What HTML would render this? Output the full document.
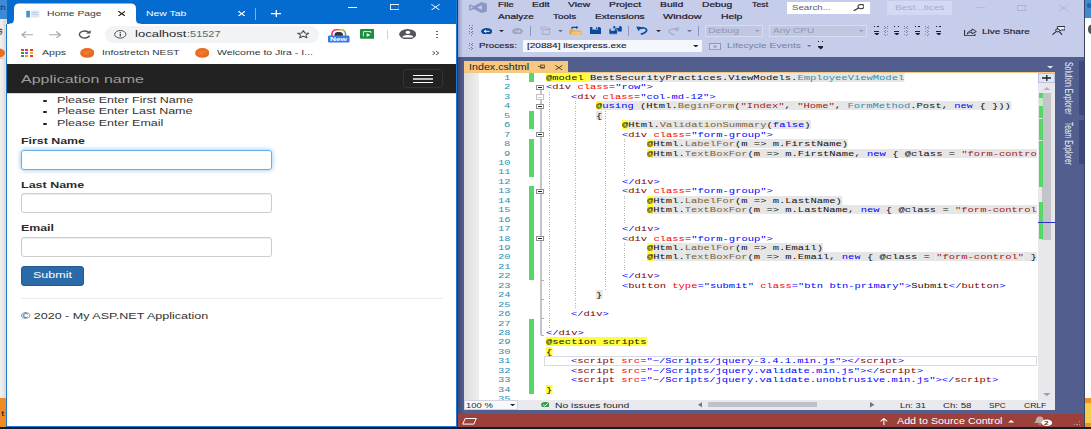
<!DOCTYPE html>
<html><head><meta charset="utf-8"><title>Home Page</title>
<style>
html,body{margin:0;padding:0}
body{width:1091px;height:429px;overflow:hidden;background:#fff;position:relative;font-family:"Liberation Sans", sans-serif}
#r{position:absolute;left:0;top:0;width:1091px;height:429px;overflow:hidden}
#r div,#r svg,#r span.t{position:absolute;display:block}
#r span.t{white-space:pre;transform-origin:0 0;font-family:"Liberation Sans", sans-serif}
#r span.m{font-family:"Liberation Mono", monospace}
#r .cl{position:absolute;white-space:pre;transform-origin:0 0;font-family:"Liberation Mono", monospace}
#r .cl span{position:static;display:inline}
</style></head>
<body><div id="r">
<div style="left:0px;top:0px;width:7px;height:18.5px;background:#3d8bd4;"></div>
<div style="left:0px;top:18.5px;width:7px;height:379px;background:linear-gradient(90deg,#f0f0f0 0%,#e9e9e9 45%,#d9d9d9 68%,#eadcd5 76%,#eadcd5 100%);"></div>
<div style="left:0px;top:58px;width:5px;height:1px;background:#cfd2d6;"></div>
<div style="left:0px;top:397.5px;width:7px;height:29.5px;background:#f08a24;"></div>
<span class="t" style="left:1px;top:410.00px;font-size:7.99px;line-height:7.99px;color:#222;transform:scaleX(1.5775);">t</span>
<span class="t" style="left:-3.5px;top:3.52px;font-size:7.56px;line-height:7.56px;color:#15304d;transform:scaleX(1.0896);">ch</span>
<svg style="left:0px;top:47.6px;" width="6" height="10" viewBox="0 0 6 10" preserveAspectRatio="none"><ellipse cx="-2.4" cy="5" rx="7.4" ry="4.8" fill="#ea6a1f"/></svg>
<svg style="left:0px;top:28px;" width="3" height="8" viewBox="0 0 3 8" preserveAspectRatio="none"><path d="M0 1 L2.4 2 M0 3.4 L2.4 4.4 M0 6 L2 6" stroke="#444" stroke-width="1.2" fill="none"/></svg>
<div style="left:1084px;top:0px;width:7px;height:17.6px;background:#3d8bd4;"></div>
<div style="left:1086.5px;top:3.2px;width:4.5px;height:4.6px;background:#2e5f96;border-radius:2px"></div>
<div style="left:1084px;top:17.6px;width:7px;height:380.2px;background:#ffffff;"></div>
<div style="left:1084px;top:397.8px;width:7px;height:29px;background:#f4901f;"></div>
<div style="left:1085.4px;top:402.5px;width:5.6px;height:20px;background:#f4cf4e;"></div>
<svg style="left:1087px;top:24px;" width="4" height="11" viewBox="0 0 4 11" preserveAspectRatio="none"><ellipse cx="4.4" cy="5.3" rx="3.4" ry="4.6" fill="#53565a"/></svg>
<div style="left:6.5px;top:0px;width:450px;height:426.8px;background:#ffffff;"></div>
<div style="left:6.5px;top:0px;width:450px;height:23.7px;background:#046bd1;"></div>
<svg style="left:9px;top:3px" width="132" height="23" viewBox="0 0 132 23" preserveAspectRatio="none"><path d="M0 20.7 C4 20.7 5 19 5 15.5 L5 5.4 C5 2 7 0.45 10 0.45 L122 0.45 C125 0.45 127 2 127 5.4 L127 15.5 C127 19 128 20.7 132 20.7 L132 23 L0 23 Z" fill="#fff"/></svg>
<svg style="left:25.5px;top:9.5px;" width="14" height="8" viewBox="0 0 14 8" preserveAspectRatio="none"><rect x="0.3" y="0.8" width="3.6" height="6.6" fill="#3b93d6"/><rect x="5" y="0.6" width="8.4" height="7" fill="#dfe6f3"/><rect x="6.2" y="2.2" width="5" height="0.9" fill="#b9c4dd"/><rect x="6.2" y="4.2" width="6" height="0.9" fill="#c5cfe4"/></svg>
<span class="t" style="left:47.3px;top:9.61px;font-size:7.99px;line-height:7.99px;color:#3c3c3c;transform:scaleX(1.2923);">Home Page</span>
<svg style="left:117.5px;top:10.8px;" width="7.6" height="5.4" viewBox="0 0 7.6 5.4" preserveAspectRatio="none"><path d="M0.3 0.2 L7.3 5.2 M7.3 0.2 L0.3 5.2" stroke="#222" stroke-width="1.15" fill="none"/></svg>
<span class="t" style="left:145.7px;top:9.61px;font-size:7.99px;line-height:7.99px;color:#ffffff;transform:scaleX(1.3033);">New Tab</span>
<svg style="left:238px;top:10.8px;" width="7.4" height="5.4" viewBox="0 0 7.4 5.4" preserveAspectRatio="none"><path d="M0.3 0.2 L7.1 5.2 M7.1 0.2 L0.3 5.2" stroke="#fff" stroke-width="1.15" fill="none"/></svg>
<div style="left:255.2px;top:8px;width:0.9px;height:11.5px;background:#7fb0e6;"></div>
<svg style="left:270.5px;top:10px;" width="10.6" height="7.2" viewBox="0 0 10.6 7.2" preserveAspectRatio="none"><path d="M5.3 0 V7.2 M0 3.6 H10.6" stroke="#fff" stroke-width="1.3" fill="none"/></svg>
<div style="left:348px;top:6.9px;width:9.2px;height:0.9px;background:#ffffff;"></div>
<svg style="left:389.6px;top:4.2px;" width="9.8" height="6.2" viewBox="0 0 9.8 6.2" preserveAspectRatio="none"><rect x="0.5" y="0.5" width="8.8" height="5.2" stroke="#fff" stroke-width="0.9" fill="none"/></svg>
<svg style="left:431px;top:3.9px;" width="9" height="6.4" viewBox="0 0 9 6.4" preserveAspectRatio="none"><path d="M0.2 0.2 L8.8 6.2 M8.8 0.2 L0.2 6.2" stroke="#fff" stroke-width="0.95" fill="none"/></svg>
<svg style="left:20.8px;top:30.6px;" width="12.4" height="7.6" viewBox="0 0 12.4 7.6" preserveAspectRatio="none"><path d="M12.2 3.8 H1 M5.2 0.5 L0.9 3.8 L5.2 7.1" stroke="#a4a8ad" stroke-width="1.15" fill="none"/></svg>
<svg style="left:49.4px;top:30.6px;" width="12.4" height="7.6" viewBox="0 0 12.4 7.6" preserveAspectRatio="none"><path d="M0.2 3.8 H11.4 M7.2 0.5 L11.5 3.8 L7.2 7.1" stroke="#a4a8ad" stroke-width="1.15" fill="none"/></svg>
<svg style="left:78.3px;top:30px;" width="13" height="8.6" viewBox="0 0 13 8.6" preserveAspectRatio="none"><path d="M10.6 2.2 A5.2 3.5 0 1 0 11.6 5.6" stroke="#4b4e52" stroke-width="1.4" fill="none"/><path d="M12.6 0.2 V3.6 H7.8 Z" fill="#4b4e52"/></svg>
<div style="left:104.5px;top:25.8px;width:214.5px;height:16.8px;background:#f1f3f4;border-radius:8.4px"></div>
<svg style="left:114px;top:30px;" width="12.6" height="8.6" viewBox="0 0 12.6 8.6" preserveAspectRatio="none"><ellipse cx="6.3" cy="4.3" rx="5.6" ry="3.8" stroke="#4b4e52" stroke-width="1" fill="none"/><rect x="5.6" y="3.7" width="1.4" height="2.7" fill="#4b4e52"/><rect x="5.6" y="1.9" width="1.4" height="1" fill="#4b4e52"/></svg>
<span class="t" style="left:135px;top:29.72px;font-size:9.16px;line-height:9.16px;color:#26282b;transform:scaleX(1.4222);">localhost</span>
<span class="t" style="left:186.9px;top:29.72px;font-size:9.16px;line-height:9.16px;color:#63666a;transform:scaleX(1.1993);">:51527</span>
<svg style="left:296.5px;top:30.2px;" width="12.6" height="8.4" viewBox="0 0 12.6 8.4" preserveAspectRatio="none"><path d="M6.3 0.6 L8 3.1 L11.9 3.3 L8.9 5.1 L10 7.8 L6.3 6.2 L2.6 7.8 L3.7 5.1 L0.7 3.3 L4.6 3.1 Z" stroke="#4b4e52" stroke-width="1.05" fill="none" stroke-linejoin="round"/></svg>
<svg style="left:328px;top:29px;" width="21.5" height="13.5" viewBox="0 0 21.5 13.5" preserveAspectRatio="none"><defs><linearGradient id="rb" x1="0" x2="1" y1="0" y2="0"><stop offset="0" stop-color="#ec1c8c"/><stop offset="0.4" stop-color="#f4503a"/><stop offset="0.7" stop-color="#f8a61f"/><stop offset="1" stop-color="#3fb868"/></linearGradient></defs><path d="M4 8 V5 A4.2 4.2 0 0 1 8.2 0.8 H13.3 A4.2 4.2 0 0 1 17.5 5 V8" stroke="url(#rb)" stroke-width="1.5" fill="#fff"/><path d="M6.6 8 V5.6 A3 2.6 0 0 1 9.6 3 H11.9 A3 2.6 0 0 1 14.9 5.6 V8 Z" fill="#2f3640"/><rect x="0" y="6.6" width="21.5" height="6.9" rx="1.3" fill="#3c78e6"/></svg>
<span class="t" style="left:330.2px;top:35.75px;font-size:6.1px;line-height:6.1px;font-weight:700;color:#ffffff;transform:scaleX(1.3566);">New</span>
<svg style="left:360px;top:29.4px;" width="14.4" height="9.8" viewBox="0 0 14.4 9.8" preserveAspectRatio="none"><rect x="0" y="0" width="14.4" height="9.8" rx="1.2" fill="#1e8e3e"/><path d="M3.4 7.4 V2.6 H11 V4" stroke="#d7f0dc" stroke-width="1" fill="none"/><path d="M6.6 4.2 L10.6 6 L6.6 7.8 Z" fill="#fff"/></svg>
<div style="left:387.2px;top:29.6px;width:0.9px;height:9.6px;background:#cfd2d6;"></div>
<svg style="left:399px;top:28.9px;" width="17.4" height="10.6" viewBox="0 0 17.4 10.6" preserveAspectRatio="none"><ellipse cx="8.7" cy="5.3" rx="8.5" ry="5.2" fill="#53565a"/><ellipse cx="8.9" cy="3.3" rx="2.4" ry="1.65" fill="#fff"/><path d="M3.4 8.2 C3.4 5.2 14.4 5.2 14.4 8.2 C11.4 8.5 6.4 8.5 3.4 8.2 Z" fill="#fff"/></svg>
<div style="left:436px;top:31px;width:2px;height:1.4px;background:#4b4e52;border-radius:1px"></div>
<div style="left:436px;top:33.9px;width:2px;height:1.4px;background:#4b4e52;border-radius:1px"></div>
<div style="left:436px;top:36.8px;width:2px;height:1.4px;background:#4b4e52;border-radius:1px"></div>
<div style="left:20.6px;top:49.1px;width:3px;height:1.8px;background:#e53935;"></div>
<div style="left:25.1px;top:49.1px;width:3px;height:1.8px;background:#e53935;"></div>
<div style="left:29.6px;top:49.1px;width:3px;height:1.8px;background:#e53935;"></div>
<div style="left:20.6px;top:52.1px;width:3px;height:1.8px;background:#2e9b4e;"></div>
<div style="left:25.1px;top:52.1px;width:3px;height:1.8px;background:#3b7ded;"></div>
<div style="left:29.6px;top:52.1px;width:3px;height:1.8px;background:#f4b400;"></div>
<div style="left:20.6px;top:55.1px;width:3px;height:1.8px;background:#2e9b4e;"></div>
<div style="left:25.1px;top:55.1px;width:3px;height:1.8px;background:#f4a000;"></div>
<div style="left:29.6px;top:55.1px;width:3px;height:1.8px;background:#e53935;"></div>
<span class="t" style="left:41.5px;top:49.08px;font-size:7.85px;line-height:7.85px;color:#33363a;transform:scaleX(1.3471);">Apps</span>
<svg style="left:79.7px;top:47.8px;" width="14.6" height="9.9" viewBox="0 0 14.6 9.9" preserveAspectRatio="none"><ellipse cx="7.3" cy="4.95" rx="7.2" ry="4.9" fill="#ea6a1f"/><path d="M3.4 4.3 C5 3.2 6.4 5 8 4 S10.4 3.6 11.4 4.2 M3.8 6 C5.4 5.2 7 6.6 8.8 5.8" stroke="#f29a5d" stroke-width="0.7" fill="none"/></svg>
<svg style="left:194.7px;top:47.8px;" width="14.6" height="9.9" viewBox="0 0 14.6 9.9" preserveAspectRatio="none"><ellipse cx="7.3" cy="4.95" rx="7.2" ry="4.9" fill="#ea6a1f"/><path d="M3.4 4.3 C5 3.2 6.4 5 8 4 S10.4 3.6 11.4 4.2 M3.8 6 C5.4 5.2 7 6.6 8.8 5.8" stroke="#f29a5d" stroke-width="0.7" fill="none"/></svg>
<span class="t" style="left:102px;top:49.08px;font-size:7.85px;line-height:7.85px;color:#33363a;transform:scaleX(1.2957);">Infostretch NEST</span>
<span class="t" style="left:217px;top:49.08px;font-size:7.85px;line-height:7.85px;color:#33363a;transform:scaleX(1.3360);">Welcome to Jira - I...</span>
<svg style="left:432px;top:51px;" width="7.4" height="4.2" viewBox="0 0 7.4 4.2" preserveAspectRatio="none"><path d="M0.4 0.2 L3 2.1 L0.4 4 M4 0.2 L6.8 2.1 L4 4" stroke="#4b4e52" stroke-width="0.95" fill="none"/></svg>
<div style="left:7.1px;top:63.7px;width:448.7px;height:29.6px;background:#222222;"></div>
<div style="left:7.1px;top:93px;width:448.7px;height:1px;background:#d6d6d6;"></div>
<span class="t" style="left:21px;top:73.90px;font-size:10.61px;line-height:10.61px;color:#9d9d9d;transform:scaleX(1.5112);">Application name</span>
<div style="left:403px;top:69.3px;width:40px;height:19.2px;background:transparent;border:1px solid #333;border-radius:3px;box-sizing:border-box"></div>
<div style="left:413px;top:74.7px;width:20px;height:1.4px;background:#ffffff;"></div>
<div style="left:413px;top:78.3px;width:20px;height:1.5px;background:#bdbdbd;"></div>
<div style="left:413px;top:81.7px;width:20px;height:1.4px;background:#ffffff;"></div>
<div style="left:7.1px;top:93.3px;width:440px;height:40px;overflow:hidden;background:none" id="vs">
<div style="left:-7.1px;top:-93.3px;width:0;height:0">
<div style="left:43.2px;top:99.5px;width:4px;height:2.2px;background:#222;border-radius:1.1px"></div>
<span class="t" style="left:57px;top:95.54px;font-size:8.72px;line-height:8.72px;color:#333;transform:scaleX(1.4339);">Please Enter First Name</span>
<div style="left:43.2px;top:111px;width:4px;height:2.2px;background:#222;border-radius:1.1px"></div>
<span class="t" style="left:57px;top:107.04px;font-size:8.72px;line-height:8.72px;color:#333;transform:scaleX(1.4336);">Please Enter Last Name</span>
<div style="left:43.2px;top:122.5px;width:4px;height:2.2px;background:#222;border-radius:1.1px"></div>
<span class="t" style="left:57px;top:118.54px;font-size:8.72px;line-height:8.72px;color:#333;transform:scaleX(1.4348);">Please Enter Email</span>
</div>
</div>
<span class="t" style="left:21px;top:136.59px;font-size:8.43px;line-height:8.43px;font-weight:700;color:#2b2b2b;transform:scaleX(1.4702);">First Name</span>
<div style="left:21px;top:150.3px;width:251px;height:19.6px;background:#fff;border:1px solid #66afe9;border-radius:3px;box-sizing:border-box;box-shadow:0 0 5px rgba(102,175,233,.75)"></div>
<span class="t" style="left:21px;top:180.69px;font-size:8.43px;line-height:8.43px;font-weight:700;color:#2b2b2b;transform:scaleX(1.4832);">Last Name</span>
<div style="left:21px;top:193.4px;width:251px;height:19.8px;background:#fff;border:1px solid #cccccc;border-radius:3px;box-sizing:border-box;box-shadow:inset 0 1px 1px rgba(0,0,0,.07)"></div>
<span class="t" style="left:21px;top:223.88px;font-size:8.43px;line-height:8.43px;font-weight:700;color:#2b2b2b;transform:scaleX(1.4677);">Email</span>
<div style="left:21px;top:237.3px;width:251px;height:19.4px;background:#fff;border:1px solid #cccccc;border-radius:3px;box-sizing:border-box;box-shadow:inset 0 1px 1px rgba(0,0,0,.07)"></div>
<div style="left:21px;top:266.2px;width:62.6px;height:19.4px;background:#2a6aa9;border:1px solid #245a90;border-radius:3px;box-sizing:border-box"></div>
<span class="t" style="left:32.6px;top:271.46px;font-size:8.87px;line-height:8.87px;color:#ffffff;transform:scaleX(1.4105);">Submit</span>
<div style="left:21px;top:298.2px;width:422px;height:0.8px;background:#ececec;"></div>
<span class="t" style="left:21px;top:311.79px;font-size:8.43px;line-height:8.43px;color:#333;transform:scaleX(1.4895);">© 2020 - My ASP.NET Application</span>
<div style="left:5.8px;top:23.7px;width:1.3px;height:403.3px;background:#1f78cf;"></div>
<div style="left:455.8px;top:0px;width:1.4px;height:427px;background:#1f78cf;"></div>
<div style="left:6.5px;top:426px;width:450px;height:1px;background:#1b76d6;"></div>
<div style="left:0px;top:427px;width:1091px;height:2px;background:#141a26;"></div>
<div style="left:458px;top:0px;width:626px;height:427px;background:#c6cdea;"></div>
<div style="left:457.2px;top:0px;width:1.2px;height:427px;background:#2c3560;"></div>
<div style="left:458.3px;top:0px;width:5px;height:57px;background:linear-gradient(90deg,#939dca,#c6cdea);"></div>
<div style="left:1083.6px;top:0px;width:1.2px;height:427px;background:#3b4466;"></div>
<svg style="left:468.9px;top:2px;" width="17.8" height="11" viewBox="0 0 17.8 11" preserveAspectRatio="none"><path d="M12.6 0 L17.8 1.4 V9.6 L12.6 11 L4.6 6.9 L1.6 8.6 L0 8 V3 L1.6 2.4 L4.6 4.1 Z M12.8 3.2 L8.2 5.5 L12.8 7.8 Z M1.5 3.7 V7.3 L4 5.5 Z" fill="#8b97c5" fill-rule="evenodd"/></svg>
<span class="t" style="left:498px;top:0.72px;font-size:7.56px;line-height:7.56px;color:#1f1a2e;transform:scaleX(1.2981);-webkit-text-stroke:0.22px #1f1a2e;">File</span>
<span class="t" style="left:531.8px;top:0.72px;font-size:7.56px;line-height:7.56px;color:#1f1a2e;transform:scaleX(1.3522);-webkit-text-stroke:0.22px #1f1a2e;">Edit</span>
<span class="t" style="left:567.7px;top:0.72px;font-size:7.56px;line-height:7.56px;color:#1f1a2e;transform:scaleX(1.3613);-webkit-text-stroke:0.22px #1f1a2e;">View</span>
<span class="t" style="left:608.7px;top:0.72px;font-size:7.56px;line-height:7.56px;color:#1f1a2e;transform:scaleX(1.3660);-webkit-text-stroke:0.22px #1f1a2e;">Project</span>
<span class="t" style="left:659.8px;top:0.72px;font-size:7.56px;line-height:7.56px;color:#1f1a2e;transform:scaleX(1.3812);-webkit-text-stroke:0.22px #1f1a2e;">Build</span>
<span class="t" style="left:701.8px;top:0.72px;font-size:7.56px;line-height:7.56px;color:#1f1a2e;transform:scaleX(1.3573);-webkit-text-stroke:0.22px #1f1a2e;">Debug</span>
<span class="t" style="left:752.2px;top:0.72px;font-size:7.56px;line-height:7.56px;color:#1f1a2e;transform:scaleX(1.1630);-webkit-text-stroke:0.22px #1f1a2e;">Test</span>
<span class="t" style="left:498px;top:12.68px;font-size:7.85px;line-height:7.85px;color:#1f1a2e;transform:scaleX(1.2900);-webkit-text-stroke:0.22px #1f1a2e;">Analyze</span>
<span class="t" style="left:553.2px;top:12.68px;font-size:7.85px;line-height:7.85px;color:#1f1a2e;transform:scaleX(1.2614);-webkit-text-stroke:0.22px #1f1a2e;">Tools</span>
<span class="t" style="left:595px;top:12.68px;font-size:7.85px;line-height:7.85px;color:#1f1a2e;transform:scaleX(1.2951);-webkit-text-stroke:0.22px #1f1a2e;">Extensions</span>
<span class="t" style="left:663.3px;top:12.68px;font-size:7.85px;line-height:7.85px;color:#1f1a2e;transform:scaleX(1.3796);-webkit-text-stroke:0.22px #1f1a2e;">Window</span>
<span class="t" style="left:720.8px;top:12.68px;font-size:7.85px;line-height:7.85px;color:#1f1a2e;transform:scaleX(1.3258);-webkit-text-stroke:0.22px #1f1a2e;">Help</span>
<div style="left:787.3px;top:1.5px;width:83.2px;height:12.1px;background:#ffffff;"></div>
<span class="t" style="left:792.4px;top:3.82px;font-size:7.56px;line-height:7.56px;color:#5b5b66;transform:scaleX(1.2846);">Search...</span>
<svg style="left:852.5px;top:3.8px;" width="11.8" height="7.2" viewBox="0 0 11.8 7.2" preserveAspectRatio="none"><ellipse cx="8" cy="2.6" rx="3.1" ry="2.1" stroke="#3a3a44" stroke-width="1.1" fill="none"/><path d="M5.6 4 L0.6 6.8" stroke="#3a3a44" stroke-width="1.3"/></svg>
<div style="left:887.1px;top:1px;width:65.1px;height:13.8px;background:#d3d9f3;"></div>
<span class="t" style="left:894.8px;top:3.82px;font-size:7.56px;line-height:7.56px;color:#a3add6;transform:scaleX(1.3461);">Best...tices</span>
<div style="left:976px;top:7.2px;width:9px;height:0.8px;background:#b2bbdf;"></div>
<div style="left:1017px;top:5.1px;width:9.4px;height:5.8px;background:transparent;border:1px solid #aab3d8;box-sizing:border-box"></div>
<svg style="left:1058.8px;top:5px;" width="8.8" height="6" viewBox="0 0 8.8 6" preserveAspectRatio="none"><path d="M0.2 0.2 L8.6 5.8 M8.6 0.2 L0.2 5.8" stroke="#aab3d8" stroke-width="0.9" fill="none"/></svg>
<div style="left:469px;top:25.2px;width:1.3px;height:0.85px;background:#6d789f;"></div>
<div style="left:472px;top:25.2px;width:1.3px;height:0.85px;background:#6d789f;"></div>
<div style="left:470.5px;top:26.55px;width:1.3px;height:0.85px;background:#6d789f;"></div>
<div style="left:469px;top:27.9px;width:1.3px;height:0.85px;background:#6d789f;"></div>
<div style="left:472px;top:27.9px;width:1.3px;height:0.85px;background:#6d789f;"></div>
<div style="left:470.5px;top:29.25px;width:1.3px;height:0.85px;background:#6d789f;"></div>
<div style="left:469px;top:30.6px;width:1.3px;height:0.85px;background:#6d789f;"></div>
<div style="left:472px;top:30.6px;width:1.3px;height:0.85px;background:#6d789f;"></div>
<div style="left:470.5px;top:31.95px;width:1.3px;height:0.85px;background:#6d789f;"></div>
<div style="left:469px;top:33.3px;width:1.3px;height:0.85px;background:#6d789f;"></div>
<div style="left:472px;top:33.3px;width:1.3px;height:0.85px;background:#6d789f;"></div>
<div style="left:470.5px;top:34.65px;width:1.3px;height:0.85px;background:#6d789f;"></div>
<div style="left:469px;top:42.5px;width:1.3px;height:0.85px;background:#6d789f;"></div>
<div style="left:472px;top:42.5px;width:1.3px;height:0.85px;background:#6d789f;"></div>
<div style="left:470.5px;top:43.85px;width:1.3px;height:0.85px;background:#6d789f;"></div>
<div style="left:469px;top:45.2px;width:1.3px;height:0.85px;background:#6d789f;"></div>
<div style="left:472px;top:45.2px;width:1.3px;height:0.85px;background:#6d789f;"></div>
<div style="left:470.5px;top:46.55px;width:1.3px;height:0.85px;background:#6d789f;"></div>
<div style="left:469px;top:47.9px;width:1.3px;height:0.85px;background:#6d789f;"></div>
<div style="left:472px;top:47.9px;width:1.3px;height:0.85px;background:#6d789f;"></div>
<div style="left:470.5px;top:49.25px;width:1.3px;height:0.85px;background:#6d789f;"></div>
<svg style="left:481px;top:27.5px;" width="11.4" height="6.6" viewBox="0 0 11.4 6.6" preserveAspectRatio="none"><ellipse cx="5.7" cy="3.3" rx="5.6" ry="3.3" fill="#0c4a97"/><path d="M8.6 3.3 H3.6 M5.2 2 L3.2 3.3 L5.2 4.6" stroke="#fff" stroke-width="0.95" fill="none"/></svg>
<svg style="left:499.3px;top:29.8px;" width="5" height="2.2" viewBox="0 0 5 2.2" preserveAspectRatio="none"><path d="M0 0 H5 L2.5 2.2 Z" fill="#2a2a3a"/></svg>
<svg style="left:511.9px;top:27.5px;" width="11" height="6.6" viewBox="0 0 11 6.6" preserveAspectRatio="none"><ellipse cx="5.5" cy="3.3" rx="5.4" ry="3.3" fill="#a0a6bf"/><path d="M2.8 3.3 H7.8 M6.2 2 L8.2 3.3 L6.2 4.6" stroke="#c9cfe6" stroke-width="0.95" fill="none"/></svg>
<div style="left:530.1px;top:25.5px;width:0.9px;height:10.8px;background:#8e98bf;"></div>
<svg style="left:539px;top:25.6px;" width="12" height="9" viewBox="0 0 12 9" preserveAspectRatio="none"><path d="M3.6 3.6 H10.6 V8.4 H3.6 Z" stroke="#a4abc6" stroke-width="1" fill="none"/><path d="M0.6 3.4 L5.4 0.8 L11.6 3" stroke="#a4abc6" stroke-width="0.9" fill="none"/><path d="M1.6 1.2 L2.6 2.6 M3 0.4 L3.2 1.8" stroke="#a4abc6" stroke-width="0.7" fill="none"/></svg>
<svg style="left:557.7px;top:29.8px;" width="5" height="2.2" viewBox="0 0 5 2.2" preserveAspectRatio="none"><path d="M0 0 H5 L2.5 2.2 Z" fill="#6c7188"/></svg>
<svg style="left:569px;top:26.2px;" width="13.2" height="8.8" viewBox="0 0 13.2 8.8" preserveAspectRatio="none"><path d="M0.3 8.6 V3.4 H4.2 L5.4 4.4 H12.6 V8.6 Z" fill="#e9a646"/><path d="M1.8 8 L3.8 5.4 H12.9 L11.2 8.6 H0.6 Z" fill="#f6c477"/><path d="M3 3 V1.4 H7.6" stroke="#0c4a97" stroke-width="1.1" fill="none"/><path d="M7 0 L9.6 1.5 L7 3 Z" fill="#0c4a97"/></svg>
<svg style="left:590px;top:27px;" width="11.2" height="7" viewBox="0 0 11.2 7" preserveAspectRatio="none"><path d="M0 0 H9.4 L11.2 1.2 V7 H0 Z" fill="#0c4a97"/><rect x="2.4" y="0" width="5.6" height="2.6" fill="#c6cdea"/><rect x="6" y="0.4" width="1.4" height="1.7" fill="#0c4a97"/></svg>
<svg style="left:609px;top:26.4px;" width="12.8" height="8.2" viewBox="0 0 12.8 8.2" preserveAspectRatio="none"><path d="M4.4 0 H11.4 L12.8 1 V5.4 H4.4 Z" fill="#0c4a97"/><rect x="6.2" y="0" width="4" height="1.9" fill="#c6cdea"/><path d="M0 2.8 H7 L8.4 3.8 V8.2 H0 Z" fill="#0c4a97" stroke="#c6cdea" stroke-width="0.7"/><rect x="1.9" y="3" width="3.8" height="1.8" fill="#c6cdea"/></svg>
<div style="left:627.9px;top:25.5px;width:0.9px;height:10.8px;background:#8e98bf;"></div>
<svg style="left:636.3px;top:26.4px;" width="11.8" height="8.8" viewBox="0 0 11.8 8.8" preserveAspectRatio="none"><path d="M4.8 8.3 C9 7 11.2 5.4 10.5 3.6 C9.8 1.7 6.4 1.5 3.4 2.7" stroke="#0c4a97" stroke-width="1.7" fill="none"/><path d="M0.2 0.5 L5.2 0.9 L2.6 5.2 Z" fill="#0c4a97"/></svg>
<svg style="left:656px;top:29.8px;" width="5" height="2.2" viewBox="0 0 5 2.2" preserveAspectRatio="none"><path d="M0 0 H5 L2.5 2.2 Z" fill="#2a2a3a"/></svg>
<svg style="left:668px;top:26.6px;" width="11.6" height="8.4" viewBox="0 0 11.6 8.4" preserveAspectRatio="none"><path d="M6.8 8.1 C2.6 6.9 0.6 5.4 1.2 3.6 C1.9 1.8 5.2 1.6 8.2 2.7" stroke="#a4abc6" stroke-width="1.3" fill="none"/><path d="M11.4 0.5 L6.6 0.9 L9.2 5 Z" fill="#a4abc6"/></svg>
<svg style="left:687.3px;top:29.8px;" width="5" height="2.2" viewBox="0 0 5 2.2" preserveAspectRatio="none"><path d="M0 0 H5 L2.5 2.2 Z" fill="#6c7188"/></svg>
<div style="left:698.2px;top:25.5px;width:0.9px;height:10.8px;background:#8e98bf;"></div>
<div style="left:705px;top:25px;width:57.8px;height:11.6px;background:#c0c7e0;border:1px solid #d7dcf0;box-sizing:border-box"></div>
<span class="t" style="left:708px;top:27.25px;font-size:7.7px;line-height:7.7px;color:#8f97b7;transform:scaleX(1.3727);">Debug</span>
<svg style="left:754.8px;top:29.8px;" width="4.6" height="2" viewBox="0 0 4.6 2" preserveAspectRatio="none"><path d="M0 0 H4.6 L2.3 2 Z" fill="#8f97b7"/></svg>
<div style="left:769.2px;top:25px;width:97.4px;height:11.6px;background:#c0c7e0;border:1px solid #d7dcf0;box-sizing:border-box"></div>
<span class="t" style="left:772.8px;top:27.25px;font-size:7.7px;line-height:7.7px;color:#8f97b7;transform:scaleX(1.3059);">Any CPU</span>
<svg style="left:858.6px;top:29.8px;" width="4.6" height="2" viewBox="0 0 4.6 2" preserveAspectRatio="none"><path d="M0 0 H4.6 L2.3 2 Z" fill="#8f97b7"/></svg>
<div style="left:873.6px;top:25.6px;width:1.6px;height:1.3px;background:#20202c;"></div>
<div style="left:877.2px;top:25.6px;width:1.6px;height:1.3px;background:#20202c;"></div>
<div style="left:873.6px;top:30.8px;width:5.6px;height:1.2px;background:#20202c;"></div>
<svg style="left:873.6px;top:32.8px;" width="5.6" height="2.6" viewBox="0 0 5.6 2.6" preserveAspectRatio="none"><path d="M0 0 H5.6 L2.8 2.6 Z" fill="#20202c"/></svg>
<div style="left:893.9px;top:25.6px;width:1.6px;height:1.3px;background:#20202c;"></div>
<div style="left:897.5px;top:25.6px;width:1.6px;height:1.3px;background:#20202c;"></div>
<div style="left:893.9px;top:30.8px;width:5.6px;height:1.2px;background:#20202c;"></div>
<svg style="left:893.9px;top:32.8px;" width="5.6" height="2.6" viewBox="0 0 5.6 2.6" preserveAspectRatio="none"><path d="M0 0 H5.6 L2.8 2.6 Z" fill="#20202c"/></svg>
<div style="left:914.8px;top:25.6px;width:1.6px;height:1.3px;background:#20202c;"></div>
<div style="left:918.4px;top:25.6px;width:1.6px;height:1.3px;background:#20202c;"></div>
<div style="left:914.8px;top:30.8px;width:5.6px;height:1.2px;background:#20202c;"></div>
<svg style="left:914.8px;top:32.8px;" width="5.6" height="2.6" viewBox="0 0 5.6 2.6" preserveAspectRatio="none"><path d="M0 0 H5.6 L2.8 2.6 Z" fill="#20202c"/></svg>
<div style="left:935.6px;top:25.6px;width:1.6px;height:1.3px;background:#20202c;"></div>
<div style="left:939.2px;top:25.6px;width:1.6px;height:1.3px;background:#20202c;"></div>
<div style="left:935.6px;top:30.8px;width:5.6px;height:1.2px;background:#20202c;"></div>
<svg style="left:935.6px;top:32.8px;" width="5.6" height="2.6" viewBox="0 0 5.6 2.6" preserveAspectRatio="none"><path d="M0 0 H5.6 L2.8 2.6 Z" fill="#20202c"/></svg>
<div style="left:883.6px;top:25.6px;width:1.3px;height:0.85px;background:#7a84ab;"></div>
<div style="left:886.6px;top:25.6px;width:1.3px;height:0.85px;background:#7a84ab;"></div>
<div style="left:885.1px;top:26.95px;width:1.3px;height:0.85px;background:#7a84ab;"></div>
<div style="left:883.6px;top:28.3px;width:1.3px;height:0.85px;background:#7a84ab;"></div>
<div style="left:886.6px;top:28.3px;width:1.3px;height:0.85px;background:#7a84ab;"></div>
<div style="left:885.1px;top:29.65px;width:1.3px;height:0.85px;background:#7a84ab;"></div>
<div style="left:883.6px;top:31px;width:1.3px;height:0.85px;background:#7a84ab;"></div>
<div style="left:886.6px;top:31px;width:1.3px;height:0.85px;background:#7a84ab;"></div>
<div style="left:885.1px;top:32.35px;width:1.3px;height:0.85px;background:#7a84ab;"></div>
<div style="left:883.6px;top:33.7px;width:1.3px;height:0.85px;background:#7a84ab;"></div>
<div style="left:886.6px;top:33.7px;width:1.3px;height:0.85px;background:#7a84ab;"></div>
<div style="left:885.1px;top:35.05px;width:1.3px;height:0.85px;background:#7a84ab;"></div>
<div style="left:904.2px;top:25.6px;width:1.3px;height:0.85px;background:#7a84ab;"></div>
<div style="left:907.2px;top:25.6px;width:1.3px;height:0.85px;background:#7a84ab;"></div>
<div style="left:905.7px;top:26.95px;width:1.3px;height:0.85px;background:#7a84ab;"></div>
<div style="left:904.2px;top:28.3px;width:1.3px;height:0.85px;background:#7a84ab;"></div>
<div style="left:907.2px;top:28.3px;width:1.3px;height:0.85px;background:#7a84ab;"></div>
<div style="left:905.7px;top:29.65px;width:1.3px;height:0.85px;background:#7a84ab;"></div>
<div style="left:904.2px;top:31px;width:1.3px;height:0.85px;background:#7a84ab;"></div>
<div style="left:907.2px;top:31px;width:1.3px;height:0.85px;background:#7a84ab;"></div>
<div style="left:905.7px;top:32.35px;width:1.3px;height:0.85px;background:#7a84ab;"></div>
<div style="left:904.2px;top:33.7px;width:1.3px;height:0.85px;background:#7a84ab;"></div>
<div style="left:907.2px;top:33.7px;width:1.3px;height:0.85px;background:#7a84ab;"></div>
<div style="left:905.7px;top:35.05px;width:1.3px;height:0.85px;background:#7a84ab;"></div>
<div style="left:925px;top:25.6px;width:1.3px;height:0.85px;background:#7a84ab;"></div>
<div style="left:928px;top:25.6px;width:1.3px;height:0.85px;background:#7a84ab;"></div>
<div style="left:926.5px;top:26.95px;width:1.3px;height:0.85px;background:#7a84ab;"></div>
<div style="left:925px;top:28.3px;width:1.3px;height:0.85px;background:#7a84ab;"></div>
<div style="left:928px;top:28.3px;width:1.3px;height:0.85px;background:#7a84ab;"></div>
<div style="left:926.5px;top:29.65px;width:1.3px;height:0.85px;background:#7a84ab;"></div>
<div style="left:925px;top:31px;width:1.3px;height:0.85px;background:#7a84ab;"></div>
<div style="left:928px;top:31px;width:1.3px;height:0.85px;background:#7a84ab;"></div>
<div style="left:926.5px;top:32.35px;width:1.3px;height:0.85px;background:#7a84ab;"></div>
<div style="left:925px;top:33.7px;width:1.3px;height:0.85px;background:#7a84ab;"></div>
<div style="left:928px;top:33.7px;width:1.3px;height:0.85px;background:#7a84ab;"></div>
<div style="left:926.5px;top:35.05px;width:1.3px;height:0.85px;background:#7a84ab;"></div>
<svg style="left:963.7px;top:28px;" width="13" height="8.4" viewBox="0 0 13 8.4" preserveAspectRatio="none"><path d="M0.6 2 V7.8 H11 V5.8" stroke="#20202c" stroke-width="1" fill="none"/><path d="M3.2 6.2 C3.4 3.9 5.4 2.7 8 2.7 V0.9 L12.3 3.5 L8 5.9 V4.3 C6 4.3 4.4 4.7 3.2 6.2 Z" stroke="#20202c" stroke-width="0.85" fill="none" stroke-linejoin="round"/></svg>
<span class="t" style="left:982.2px;top:27.75px;font-size:7.7px;line-height:7.7px;color:#1f1a2e;transform:scaleX(1.3001);-webkit-text-stroke:0.15px #1f1a2e;">Live Share</span>
<svg style="left:1051.8px;top:26.2px;" width="13.6" height="8.9" viewBox="0 0 13.6 8.9" preserveAspectRatio="none"><path d="M5.4 2.8 V0.5 H13 V4 H9.4 L8.4 4.9 V4" stroke="#20202c" stroke-width="0.9" fill="#eaedf9"/><ellipse cx="5.6" cy="4.4" rx="2.1" ry="1.45" stroke="#20202c" stroke-width="0.95" fill="#c6cdea"/><path d="M0.5 8.6 L3.8 5.9 M10 8.6 L7.4 5.9" stroke="#20202c" stroke-width="1.05" fill="none"/></svg>
<span class="t" style="left:478.7px;top:41.95px;font-size:7.7px;line-height:7.7px;color:#1f1a2e;transform:scaleX(1.2673);-webkit-text-stroke:0.15px #1f1a2e;">Process:</span>
<div style="left:523px;top:40px;width:178.6px;height:12px;background:#f6f7fc;"></div>
<span class="t" style="left:527px;top:41.95px;font-size:7.7px;line-height:7.7px;color:#1f1a2e;transform:scaleX(1.3033);-webkit-text-stroke:0.12px #1f1a2e;">[20884] iisexpress.exe</span>
<svg style="left:692.8px;top:45px;" width="5.6" height="2.4" viewBox="0 0 5.6 2.4" preserveAspectRatio="none"><path d="M0 0 H5.6 L2.8 2.4 Z" fill="#20202c"/></svg>
<svg style="left:709px;top:42.8px;" width="12" height="7.2" viewBox="0 0 12 7.2" preserveAspectRatio="none"><rect x="0.5" y="0.5" width="11" height="6.2" fill="#cfd5ec" stroke="#8f97b7" stroke-width="1"/><path d="M7 2.2 L4.6 3.6 L7 5 M4.6 3.6 H8.4" stroke="#8f97b7" stroke-width="0.8" fill="none"/></svg>
<span class="t" style="left:726.8px;top:42.08px;font-size:7.85px;line-height:7.85px;color:#7780a4;transform:scaleX(1.3036);">Lifecycle Events</span>
<svg style="left:806.8px;top:45.2px;" width="4.6" height="2" viewBox="0 0 4.6 2" preserveAspectRatio="none"><path d="M0 0 H4.6 L2.3 2 Z" fill="#6b7394"/></svg>
<div style="left:817.9px;top:41.2px;width:1.6px;height:1.3px;background:#20202c;"></div>
<div style="left:821.5px;top:41.2px;width:1.6px;height:1.3px;background:#20202c;"></div>
<svg style="left:817.7px;top:47.4px;" width="5.6" height="2.6" viewBox="0 0 5.6 2.6" preserveAspectRatio="none"><path d="M0 0 H5.6 L2.8 2.6 Z" fill="#20202c"/></svg>
<div style="left:817.7px;top:46px;width:5.6px;height:1px;background:#20202c;"></div>
<div style="left:458.3px;top:57px;width:625.7px;height:357px;background:#525e8e;"></div>
<div style="left:458.3px;top:57px;width:6px;height:357px;background:linear-gradient(90deg,#3f4b7a,#525e8e);"></div>
<div style="left:1078.6px;top:61px;width:5.2px;height:54.4px;background:#3c4a7c;"></div>
<div style="left:1078.6px;top:120.3px;width:5.2px;height:44.1px;background:#3c4a7c;"></div>
<div style="left:1075.2px;top:61.5px;width:0;height:0;transform:rotate(90deg);transform-origin:0 0;background:none">
<span class="t" style="left:0px;top:0.70px;font-size:10.61px;line-height:10.61px;color:#eef1fb;transform:scaleX(0.6498);">Solution Explorer</span>
<span class="t" style="left:59.5px;top:0.70px;font-size:10.61px;line-height:10.61px;color:#eef1fb;transform:scaleX(0.6286);">Team Explorer</span>
</div>
<div style="left:464.2px;top:61.3px;width:103.5px;height:11.7px;background:#f5c97f;"></div>
<div style="left:464.2px;top:72px;width:590.5px;height:1px;background:#f3c77d;"></div>
<span class="t" style="left:468.5px;top:62.78px;font-size:8.43px;line-height:8.43px;color:#1f1a2e;transform:scaleX(1.2711);">Index.cshtml</span>
<svg style="left:538.2px;top:64.4px;" width="7.2" height="5" viewBox="0 0 7.2 5" preserveAspectRatio="none"><path d="M0 2.5 H2.8 M2.8 0.5 V4.5 M2.8 1.1 H6.7 V3.5 H2.8 M2.8 4 H6.7" stroke="#4a3520" stroke-width="0.8" fill="none"/></svg>
<svg style="left:554.9px;top:64.6px;" width="7.8" height="5.4" viewBox="0 0 7.8 5.4" preserveAspectRatio="none"><path d="M0.3 0.3 L7.5 5.1 M7.5 0.3 L0.3 5.1" stroke="#4a3520" stroke-width="0.9" fill="none"/></svg>
<svg style="left:1046.6px;top:66.2px;" width="6.4" height="2.6" viewBox="0 0 6.4 2.6" preserveAspectRatio="none"><path d="M0 0 H6.4 L3.2 2.6 Z" fill="#e4e8f6"/></svg>
<div style="left:464.2px;top:73px;width:590.5px;height:326.8px;background:#ffffff;"></div>
<div style="left:464.2px;top:73px;width:15.3px;height:326.8px;background:linear-gradient(90deg,#dcdcdc,#eeeeee);"></div>
<div style="left:529.2px;top:73px;width:4.6px;height:9.445px;background:#56d868;"></div>
<div style="left:529.2px;top:110.78px;width:4.6px;height:18.59px;background:#56d868;"></div>
<div style="left:529.2px;top:139.115px;width:4.6px;height:37.48px;background:#56d868;"></div>
<div style="left:529.2px;top:186.34px;width:4.6px;height:94.15px;background:#56d868;"></div>
<div style="left:529.2px;top:318.57px;width:4.6px;height:75.26px;background:#56d868;"></div>
<div style="left:540.2px;top:89.445px;width:1.5px;height:246.015px;background:#c4c4c4;"></div>
<div style="left:536.1px;top:84.945px;width:7.8px;height:5.2px;background:#fff;border:0.8px solid #8e8e8e;box-sizing:border-box"></div>
<div style="left:538px;top:87.145px;width:4px;height:0.9px;background:#222;"></div>
<div style="left:536.1px;top:94.39px;width:7.8px;height:5.2px;background:#fff;border:0.8px solid #c4c4c4;box-sizing:border-box"></div>
<div style="left:538px;top:96.59px;width:4px;height:0.9px;background:#d0d0d0;"></div>
<div style="left:536.1px;top:103.835px;width:7.8px;height:5.2px;background:#fff;border:0.8px solid #8e8e8e;box-sizing:border-box"></div>
<div style="left:538px;top:106.035px;width:4px;height:0.9px;background:#222;"></div>
<div style="left:536.1px;top:132.17px;width:7.8px;height:5.2px;background:#fff;border:0.8px solid #8e8e8e;box-sizing:border-box"></div>
<div style="left:538px;top:134.37px;width:4px;height:0.9px;background:#222;"></div>
<div style="left:536.1px;top:188.84px;width:7.8px;height:5.2px;background:#fff;border:0.8px solid #8e8e8e;box-sizing:border-box"></div>
<div style="left:538px;top:191.04px;width:4px;height:0.9px;background:#222;"></div>
<div style="left:536.1px;top:236.065px;width:7.8px;height:5.2px;background:#fff;border:0.8px solid #8e8e8e;box-sizing:border-box"></div>
<div style="left:538px;top:238.265px;width:4px;height:0.9px;background:#222;"></div>
<div style="left:541px;top:279.945px;width:3px;height:0.9px;background:#b0b0b0;"></div>
<div style="left:541px;top:298.835px;width:3px;height:0.9px;background:#b0b0b0;"></div>
<div style="left:541px;top:317.725px;width:3px;height:0.9px;background:#b0b0b0;"></div>
<div style="left:541px;top:335.215px;width:3px;height:0.9px;background:#b0b0b0;"></div>
<div style="left:549.4px;top:91.9px;width:1px;height:236.1px;background:repeating-linear-gradient(180deg,#b2b2b2 0,#b2b2b2 1px,rgba(255,255,255,0) 1px,rgba(255,255,255,0) 2.4px)"></div>
<div style="left:574.8px;top:101.3px;width:1px;height:207.8px;background:repeating-linear-gradient(180deg,#b2b2b2 0,#b2b2b2 1px,rgba(255,255,255,0) 1px,rgba(255,255,255,0) 2.4px)"></div>
<div style="left:605.4px;top:110.8px;width:1px;height:179.5px;background:repeating-linear-gradient(180deg,#b2b2b2 0,#b2b2b2 1px,rgba(255,255,255,0) 1px,rgba(255,255,255,0) 2.4px)"></div>
<div style="left:624.4px;top:139.1px;width:1px;height:37.8px;background:repeating-linear-gradient(180deg,#b2b2b2 0,#b2b2b2 1px,rgba(255,255,255,0) 1px,rgba(255,255,255,0) 2.4px)"></div>
<div style="left:624.4px;top:195.8px;width:1px;height:28.3px;background:repeating-linear-gradient(180deg,#b2b2b2 0,#b2b2b2 1px,rgba(255,255,255,0) 1px,rgba(255,255,255,0) 2.4px)"></div>
<div style="left:624.4px;top:243.0px;width:1px;height:28.3px;background:repeating-linear-gradient(180deg,#b2b2b2 0,#b2b2b2 1px,rgba(255,255,255,0) 1px,rgba(255,255,255,0) 2.4px)"></div>
<div style="left:544.4px;top:356.25px;width:492.4px;height:9.4px;background:transparent;border:1.2px solid #dadae6;box-sizing:border-box"></div>
<div style="left:545.1px;top:73px;width:492.4px;height:326.8px;overflow:hidden;background:none">
<div class="cl" style="left:1.00px;top:1.00px;font-size:8.1px;line-height:8.54px;transform:scaleX(1.2938);background:none"><span style="color:#111111;background:#ffff38">@model </span><span style="color:#111111;background:#e6e6e6">BestSecurityPractices.ViewModels.</span><span style="color:#2b91af;background:#e6e6e6">EmployeeViewModel</span></div>
<div class="cl" style="left:1.00px;top:10.44px;font-size:8.1px;line-height:8.54px;transform:scaleX(1.2938);background:none"><span style="color:#0000ff">&lt;</span><span style="color:#800000">div</span><span style="color:#111111"> </span><span style="color:#ff0000">class</span><span style="color:#0000ff">=</span><span style="color:#0000ff">&quot;row&quot;</span><span style="color:#0000ff">&gt;</span></div>
<div class="cl" style="left:26.15px;top:19.89px;font-size:8.1px;line-height:8.54px;transform:scaleX(1.2938);background:none"><span style="color:#0000ff">&lt;</span><span style="color:#800000">div</span><span style="color:#111111"> </span><span style="color:#ff0000">class</span><span style="color:#0000ff">=</span><span style="color:#0000ff">&quot;col-md-12&quot;</span><span style="color:#0000ff">&gt;</span></div>
<div class="cl" style="left:51.30px;top:29.34px;font-size:8.1px;line-height:8.54px;transform:scaleX(1.2938);background:none"><span style="color:#111111;background:#ffff38">@</span><span style="color:#0000ff;background:#e6e6e6">using</span><span style="color:#111111;background:#e6e6e6"> (Html.</span><span style="color:#7a6238;background:#e6e6e6">BeginForm</span><span style="color:#111111;background:#e6e6e6">(</span><span style="color:#a31515;background:#e6e6e6">&quot;Index&quot;</span><span style="color:#111111;background:#e6e6e6">, </span><span style="color:#a31515;background:#e6e6e6">&quot;Home&quot;</span><span style="color:#111111;background:#e6e6e6">, </span><span style="color:#2b91af;background:#e6e6e6">FormMethod</span><span style="color:#111111;background:#e6e6e6">.Post, </span><span style="color:#0000ff;background:#e6e6e6">new</span><span style="color:#111111;background:#e6e6e6"> { }))</span></div>
<div class="cl" style="left:51.30px;top:38.78px;font-size:8.1px;line-height:8.54px;transform:scaleX(1.2938);background:none"><span style="color:#111111;background:#e6e6e6">{</span></div>
<div class="cl" style="left:76.46px;top:48.22px;font-size:8.1px;line-height:8.54px;transform:scaleX(1.2938);background:none"><span style="color:#111111;background:#ffff38">@</span><span style="color:#111111;background:#e6e6e6">Html.</span><span style="color:#7a6238;background:#e6e6e6">ValidationSummary</span><span style="color:#111111;background:#e6e6e6">(</span><span style="color:#0000ff;background:#e6e6e6">false</span><span style="color:#111111;background:#e6e6e6">)</span></div>
<div class="cl" style="left:76.46px;top:57.67px;font-size:8.1px;line-height:8.54px;transform:scaleX(1.2938);background:none"><span style="color:#0000ff">&lt;</span><span style="color:#800000">div</span><span style="color:#111111"> </span><span style="color:#ff0000">class</span><span style="color:#0000ff">=</span><span style="color:#0000ff">&quot;form-group&quot;</span><span style="color:#0000ff">&gt;</span></div>
<div class="cl" style="left:101.61px;top:67.12px;font-size:8.1px;line-height:8.54px;transform:scaleX(1.2938);background:none"><span style="color:#111111;background:#ffff38">@</span><span style="color:#111111;background:#e6e6e6">Html.</span><span style="color:#7a6238;background:#e6e6e6">LabelFor</span><span style="color:#111111;background:#e6e6e6">(m =&gt; m.FirstName)</span></div>
<div class="cl" style="left:101.61px;top:76.56px;font-size:8.1px;line-height:8.54px;transform:scaleX(1.2938);background:none"><span style="color:#111111;background:#ffff38">@</span><span style="color:#111111;background:#e6e6e6">Html.</span><span style="color:#7a6238;background:#e6e6e6">TextBoxFor</span><span style="color:#111111;background:#e6e6e6">(m =&gt; m.FirstName, </span><span style="color:#0000ff;background:#e6e6e6">new</span><span style="color:#111111;background:#e6e6e6"> { </span><span style="color:#111111;background:#e6e6e6">@class</span><span style="color:#111111;background:#e6e6e6"> = </span><span style="color:#a31515;background:#e6e6e6">&quot;form-control&quot;</span><span style="color:#111111;background:#e6e6e6"> })</span></div>
<div class="cl" style="left:76.46px;top:104.90px;font-size:8.1px;line-height:8.54px;transform:scaleX(1.2938);background:none"><span style="color:#0000ff">&lt;/</span><span style="color:#800000">div</span><span style="color:#0000ff">&gt;</span></div>
<div class="cl" style="left:76.46px;top:114.34px;font-size:8.1px;line-height:8.54px;transform:scaleX(1.2938);background:none"><span style="color:#0000ff">&lt;</span><span style="color:#800000">div</span><span style="color:#111111"> </span><span style="color:#ff0000">class</span><span style="color:#0000ff">=</span><span style="color:#0000ff">&quot;form-group&quot;</span><span style="color:#0000ff">&gt;</span></div>
<div class="cl" style="left:101.61px;top:123.78px;font-size:8.1px;line-height:8.54px;transform:scaleX(1.2938);background:none"><span style="color:#111111;background:#ffff38">@</span><span style="color:#111111;background:#e6e6e6">Html.</span><span style="color:#7a6238;background:#e6e6e6">LabelFor</span><span style="color:#111111;background:#e6e6e6">(m =&gt; m.LastName)</span></div>
<div class="cl" style="left:101.61px;top:133.23px;font-size:8.1px;line-height:8.54px;transform:scaleX(1.2938);background:none"><span style="color:#111111;background:#ffff38">@</span><span style="color:#111111;background:#e6e6e6">Html.</span><span style="color:#7a6238;background:#e6e6e6">TextBoxFor</span><span style="color:#111111;background:#e6e6e6">(m =&gt; m.LastName, </span><span style="color:#0000ff;background:#e6e6e6">new</span><span style="color:#111111;background:#e6e6e6"> { </span><span style="color:#111111;background:#e6e6e6">@class</span><span style="color:#111111;background:#e6e6e6"> = </span><span style="color:#a31515;background:#e6e6e6">&quot;form-control&quot;</span><span style="color:#111111;background:#e6e6e6"> })</span></div>
<div class="cl" style="left:76.46px;top:152.12px;font-size:8.1px;line-height:8.54px;transform:scaleX(1.2938);background:none"><span style="color:#0000ff">&lt;/</span><span style="color:#800000">div</span><span style="color:#0000ff">&gt;</span></div>
<div class="cl" style="left:76.46px;top:161.56px;font-size:8.1px;line-height:8.54px;transform:scaleX(1.2938);background:none"><span style="color:#0000ff">&lt;</span><span style="color:#800000">div</span><span style="color:#111111"> </span><span style="color:#ff0000">class</span><span style="color:#0000ff">=</span><span style="color:#0000ff">&quot;form-group&quot;</span><span style="color:#0000ff">&gt;</span></div>
<div class="cl" style="left:101.61px;top:171.01px;font-size:8.1px;line-height:8.54px;transform:scaleX(1.2938);background:none"><span style="color:#111111;background:#ffff38">@</span><span style="color:#111111;background:#e6e6e6">Html.</span><span style="color:#7a6238;background:#e6e6e6">LabelFor</span><span style="color:#111111;background:#e6e6e6">(m =&gt; m.Email)</span></div>
<div class="cl" style="left:101.61px;top:180.46px;font-size:8.1px;line-height:8.54px;transform:scaleX(1.2938);background:none"><span style="color:#111111;background:#ffff38">@</span><span style="color:#111111;background:#e6e6e6">Html.</span><span style="color:#7a6238;background:#e6e6e6">TextBoxFor</span><span style="color:#111111;background:#e6e6e6">(m =&gt; m.Email, </span><span style="color:#0000ff;background:#e6e6e6">new</span><span style="color:#111111;background:#e6e6e6"> { </span><span style="color:#111111;background:#e6e6e6">@class</span><span style="color:#111111;background:#e6e6e6"> = </span><span style="color:#a31515;background:#e6e6e6">&quot;form-control&quot;</span><span style="color:#111111;background:#e6e6e6"> })</span></div>
<div class="cl" style="left:76.46px;top:199.35px;font-size:8.1px;line-height:8.54px;transform:scaleX(1.2938);background:none"><span style="color:#0000ff">&lt;/</span><span style="color:#800000">div</span><span style="color:#0000ff">&gt;</span></div>
<div class="cl" style="left:76.46px;top:208.79px;font-size:8.1px;line-height:8.54px;transform:scaleX(1.2938);background:none"><span style="color:#0000ff">&lt;</span><span style="color:#800000">button</span><span style="color:#111111"> </span><span style="color:#ff0000">type</span><span style="color:#0000ff">=</span><span style="color:#0000ff">&quot;submit&quot;</span><span style="color:#111111"> </span><span style="color:#ff0000">class</span><span style="color:#0000ff">=</span><span style="color:#0000ff">&quot;btn btn-primary&quot;</span><span style="color:#0000ff">&gt;</span><span style="color:#111111">Submit</span><span style="color:#0000ff">&lt;/</span><span style="color:#800000">button</span><span style="color:#0000ff">&gt;</span></div>
<div class="cl" style="left:51.30px;top:218.24px;font-size:8.1px;line-height:8.54px;transform:scaleX(1.2938);background:none"><span style="color:#111111;background:#e6e6e6">}</span></div>
<div class="cl" style="left:26.15px;top:237.12px;font-size:8.1px;line-height:8.54px;transform:scaleX(1.2938);background:none"><span style="color:#0000ff">&lt;/</span><span style="color:#800000">div</span><span style="color:#0000ff">&gt;</span></div>
<div class="cl" style="left:1.00px;top:256.01px;font-size:8.1px;line-height:8.54px;transform:scaleX(1.2938);background:none"><span style="color:#0000ff">&lt;/</span><span style="color:#800000">div</span><span style="color:#0000ff">&gt;</span></div>
<div class="cl" style="left:1.00px;top:265.46px;font-size:8.1px;line-height:8.54px;transform:scaleX(1.2938);background:none"><span style="color:#111111;background:#ffff38">@section scripts</span></div>
<div class="cl" style="left:1.00px;top:274.91px;font-size:8.1px;line-height:8.54px;transform:scaleX(1.2938);background:none"><span style="color:#111111;background:#ffff38">{</span></div>
<div class="cl" style="left:26.15px;top:284.35px;font-size:8.1px;line-height:8.54px;transform:scaleX(1.2938);background:none"><span style="color:#0000ff">&lt;</span><span style="color:#800000">script</span><span style="color:#111111"> </span><span style="color:#ff0000">src</span><span style="color:#0000ff">=</span><span style="color:#0000ff">&quot;~/Scripts/jquery-3.4.1.min.js&quot;</span><span style="color:#0000ff">&gt;</span><span style="color:#0000ff">&lt;/</span><span style="color:#800000">script</span><span style="color:#0000ff">&gt;</span></div>
<div class="cl" style="left:26.15px;top:293.80px;font-size:8.1px;line-height:8.54px;transform:scaleX(1.2938);background:none"><span style="color:#0000ff">&lt;</span><span style="color:#800000">script</span><span style="color:#111111"> </span><span style="color:#ff0000">src</span><span style="color:#0000ff">=</span><span style="color:#0000ff">&quot;~/Scripts/jquery.validate.min.js&quot;</span><span style="color:#0000ff">&gt;</span><span style="color:#0000ff">&lt;/</span><span style="color:#800000">script</span><span style="color:#0000ff">&gt;</span></div>
<div class="cl" style="left:26.15px;top:303.24px;font-size:8.1px;line-height:8.54px;transform:scaleX(1.2938);background:none"><span style="color:#0000ff">&lt;</span><span style="color:#800000">script</span><span style="color:#111111"> </span><span style="color:#ff0000">src</span><span style="color:#0000ff">=</span><span style="color:#0000ff">&quot;~/Scripts/jquery.validate.unobtrusive.min.js&quot;</span><span style="color:#0000ff">&gt;</span><span style="color:#0000ff">&lt;/</span><span style="color:#800000">script</span><span style="color:#0000ff">&gt;</span></div>
<div class="cl" style="left:1.00px;top:312.69px;font-size:8.1px;line-height:8.54px;transform:scaleX(1.2938);background:none"><span style="color:#111111;background:#ffff38">}</span></div>
</div>
<div style="left:464.2px;top:73px;width:60px;height:326.8px;overflow:hidden;background:none">
<div class="cl" style="left:40.31px;top:1.00px;font-size:8.1px;line-height:8.54px;transform:scaleX(1.2938);color:#2b91af;background:none">1</div>
<div class="cl" style="left:40.31px;top:10.44px;font-size:8.1px;line-height:8.54px;transform:scaleX(1.2938);color:#2b91af;background:none">2</div>
<div class="cl" style="left:40.31px;top:19.89px;font-size:8.1px;line-height:8.54px;transform:scaleX(1.2938);color:#2b91af;background:none">3</div>
<div class="cl" style="left:40.31px;top:29.34px;font-size:8.1px;line-height:8.54px;transform:scaleX(1.2938);color:#2b91af;background:none">4</div>
<div class="cl" style="left:40.31px;top:38.78px;font-size:8.1px;line-height:8.54px;transform:scaleX(1.2938);color:#2b91af;background:none">5</div>
<div class="cl" style="left:40.31px;top:48.22px;font-size:8.1px;line-height:8.54px;transform:scaleX(1.2938);color:#2b91af;background:none">6</div>
<div class="cl" style="left:40.31px;top:57.67px;font-size:8.1px;line-height:8.54px;transform:scaleX(1.2938);color:#2b91af;background:none">7</div>
<div class="cl" style="left:40.31px;top:67.12px;font-size:8.1px;line-height:8.54px;transform:scaleX(1.2938);color:#2b91af;background:none">8</div>
<div class="cl" style="left:40.31px;top:76.56px;font-size:8.1px;line-height:8.54px;transform:scaleX(1.2938);color:#2b91af;background:none">9</div>
<div class="cl" style="left:34.02px;top:86.00px;font-size:8.1px;line-height:8.54px;transform:scaleX(1.2938);color:#2b91af;background:none">10</div>
<div class="cl" style="left:34.02px;top:95.45px;font-size:8.1px;line-height:8.54px;transform:scaleX(1.2938);color:#2b91af;background:none">11</div>
<div class="cl" style="left:34.02px;top:104.90px;font-size:8.1px;line-height:8.54px;transform:scaleX(1.2938);color:#2b91af;background:none">12</div>
<div class="cl" style="left:34.02px;top:114.34px;font-size:8.1px;line-height:8.54px;transform:scaleX(1.2938);color:#2b91af;background:none">13</div>
<div class="cl" style="left:34.02px;top:123.78px;font-size:8.1px;line-height:8.54px;transform:scaleX(1.2938);color:#2b91af;background:none">14</div>
<div class="cl" style="left:34.02px;top:133.23px;font-size:8.1px;line-height:8.54px;transform:scaleX(1.2938);color:#2b91af;background:none">15</div>
<div class="cl" style="left:34.02px;top:142.68px;font-size:8.1px;line-height:8.54px;transform:scaleX(1.2938);color:#2b91af;background:none">16</div>
<div class="cl" style="left:34.02px;top:152.12px;font-size:8.1px;line-height:8.54px;transform:scaleX(1.2938);color:#2b91af;background:none">17</div>
<div class="cl" style="left:34.02px;top:161.56px;font-size:8.1px;line-height:8.54px;transform:scaleX(1.2938);color:#2b91af;background:none">18</div>
<div class="cl" style="left:34.02px;top:171.01px;font-size:8.1px;line-height:8.54px;transform:scaleX(1.2938);color:#2b91af;background:none">19</div>
<div class="cl" style="left:34.02px;top:180.46px;font-size:8.1px;line-height:8.54px;transform:scaleX(1.2938);color:#2b91af;background:none">20</div>
<div class="cl" style="left:34.02px;top:189.90px;font-size:8.1px;line-height:8.54px;transform:scaleX(1.2938);color:#2b91af;background:none">21</div>
<div class="cl" style="left:34.02px;top:199.35px;font-size:8.1px;line-height:8.54px;transform:scaleX(1.2938);color:#2b91af;background:none">22</div>
<div class="cl" style="left:34.02px;top:208.79px;font-size:8.1px;line-height:8.54px;transform:scaleX(1.2938);color:#2b91af;background:none">23</div>
<div class="cl" style="left:34.02px;top:218.24px;font-size:8.1px;line-height:8.54px;transform:scaleX(1.2938);color:#2b91af;background:none">24</div>
<div class="cl" style="left:34.02px;top:227.68px;font-size:8.1px;line-height:8.54px;transform:scaleX(1.2938);color:#2b91af;background:none">25</div>
<div class="cl" style="left:34.02px;top:237.12px;font-size:8.1px;line-height:8.54px;transform:scaleX(1.2938);color:#2b91af;background:none">26</div>
<div class="cl" style="left:34.02px;top:246.57px;font-size:8.1px;line-height:8.54px;transform:scaleX(1.2938);color:#2b91af;background:none">27</div>
<div class="cl" style="left:34.02px;top:256.01px;font-size:8.1px;line-height:8.54px;transform:scaleX(1.2938);color:#2b91af;background:none">28</div>
<div class="cl" style="left:34.02px;top:265.46px;font-size:8.1px;line-height:8.54px;transform:scaleX(1.2938);color:#2b91af;background:none">29</div>
<div class="cl" style="left:34.02px;top:274.91px;font-size:8.1px;line-height:8.54px;transform:scaleX(1.2938);color:#2b91af;background:none">30</div>
<div class="cl" style="left:34.02px;top:284.35px;font-size:8.1px;line-height:8.54px;transform:scaleX(1.2938);color:#2b91af;background:none">31</div>
<div class="cl" style="left:34.02px;top:293.80px;font-size:8.1px;line-height:8.54px;transform:scaleX(1.2938);color:#2b91af;background:none">32</div>
<div class="cl" style="left:34.02px;top:303.24px;font-size:8.1px;line-height:8.54px;transform:scaleX(1.2938);color:#2b91af;background:none">33</div>
<div class="cl" style="left:34.02px;top:312.69px;font-size:8.1px;line-height:8.54px;transform:scaleX(1.2938);color:#2b91af;background:none">34</div>
<div class="cl" style="left:34.02px;top:322.13px;font-size:8.1px;line-height:8.54px;transform:scaleX(1.2938);color:#2b91af;background:none">35</div>
</div>
<div style="left:1038.3px;top:73px;width:16.4px;height:326.8px;background:#e8e8ec;"></div>
<div style="left:1038.3px;top:73px;width:16.4px;height:9.8px;background:#dfe5f6;border:1px solid #b9c2e0;box-sizing:border-box"></div>
<svg style="left:1041.6px;top:74.6px;" width="9.6" height="6.8" viewBox="0 0 9.6 6.8" preserveAspectRatio="none"><path d="M0 3 H9.6 M4.8 0 V6.8" stroke="#1e1e1e" stroke-width="1.3" fill="none"/></svg>
<svg style="left:1043px;top:86.8px;" width="7.6" height="3.2" viewBox="0 0 7.6 3.2" preserveAspectRatio="none"><path d="M0 3.2 L3.8 0 L7.6 3.2 Z" fill="#b3b4bc"/></svg>
<svg style="left:1043px;top:393px;" width="7.6" height="3.2" viewBox="0 0 7.6 3.2" preserveAspectRatio="none"><path d="M0 0 L3.8 3.2 L7.6 0 Z" fill="#9c9da6"/></svg>
<div style="left:1042.4px;top:93.4px;width:8.8px;height:146.2px;background:#c3c4ca;"></div>
<div style="left:1039.4px;top:92.8px;width:3.2px;height:24.8px;background:#56d868;"></div>
<div style="left:1039.4px;top:119.2px;width:3.2px;height:20.4px;background:#56d868;"></div>
<div style="left:1039.4px;top:141.2px;width:3.2px;height:46px;background:#56d868;"></div>
<div style="left:1039.4px;top:202.4px;width:3.2px;height:37px;background:#56d868;"></div>
<div style="left:1038.3px;top:222px;width:16.4px;height:1.1px;background:#2c2cc8;"></div>
<div style="left:1039.4px;top:98.4px;width:3.2px;height:8px;background:#c4ebc9;"></div>
<div style="left:464.2px;top:399.8px;width:590.5px;height:10.4px;background:#e9e9ee;"></div>
<div style="left:464.2px;top:399.8px;width:53.6px;height:10.4px;background:#f9f9fb;border:1px solid #d2d3dc;box-sizing:border-box"></div>
<span class="t" style="left:466.2px;top:402.12px;font-size:7.56px;line-height:7.56px;color:#1e1e1e;transform:scaleX(1.2520);">100 %</span>
<svg style="left:510.4px;top:403.8px;" width="5.2" height="2.2" viewBox="0 0 5.2 2.2" preserveAspectRatio="none"><path d="M0 0 H5.2 L2.6 2.2 Z" fill="#20202c"/></svg>
<svg style="left:540.6px;top:401.8px;" width="8.8" height="5.6" viewBox="0 0 8.8 5.6" preserveAspectRatio="none"><ellipse cx="4.4" cy="2.8" rx="4.3" ry="2.8" fill="#2f9e44"/><path d="M2.2 2.8 L3.8 4.1 L6.6 1.5" stroke="#fff" stroke-width="1" fill="none"/></svg>
<span class="t" style="left:554.7px;top:402.05px;font-size:7.7px;line-height:7.7px;color:#1e1e1e;transform:scaleX(1.3457);">No issues found</span>
<svg style="left:698px;top:402.4px;" width="4.4" height="5.6" viewBox="0 0 4.4 5.6" preserveAspectRatio="none"><path d="M4.4 0 V5.6 L0 2.8 Z" fill="#70738a"/></svg>
<div style="left:707.8px;top:401.7px;width:109.4px;height:5.8px;background:#c0c1c8;"></div>
<svg style="left:870.2px;top:402.4px;" width="4.4" height="5.6" viewBox="0 0 4.4 5.6" preserveAspectRatio="none"><path d="M0 0 V5.6 L4.4 2.8 Z" fill="#70738a"/></svg>
<span class="t" style="left:900px;top:402.05px;font-size:7.7px;line-height:7.7px;color:#1e1e1e;transform:scaleX(1.2070);">Ln: 31</span>
<span class="t" style="left:943.4px;top:402.05px;font-size:7.7px;line-height:7.7px;color:#1e1e1e;transform:scaleX(1.2579);">Ch: 58</span>
<span class="t" style="left:988.9px;top:402.05px;font-size:7.7px;line-height:7.7px;color:#1e1e1e;transform:scaleX(1.0561);">SPC</span>
<span class="t" style="left:1023.8px;top:402.05px;font-size:7.7px;line-height:7.7px;color:#1e1e1e;transform:scaleX(1.1057);">CRLF</span>
<div style="left:458.3px;top:413.9px;width:625.7px;height:13.1px;background:#9b403b;"></div>
<svg style="left:461.5px;top:418.2px;" width="15" height="6.6" viewBox="0 0 15 6.6" preserveAspectRatio="none"><path d="M3.2 0.5 H14.3 L11.8 6.1 H0.7 Z" stroke="#fff" stroke-width="1" fill="none"/></svg>
<svg style="left:880px;top:417.6px;" width="7.8" height="7" viewBox="0 0 7.8 7" preserveAspectRatio="none"><path d="M3.9 7 V0.8 M0.6 3.4 L3.9 0.6 L7.2 3.4" stroke="#fff" stroke-width="1.1" fill="none"/></svg>
<span class="t" style="left:896.5px;top:417.93px;font-size:8.14px;line-height:8.14px;color:#ffffff;transform:scaleX(1.3195);">Add to Source Control</span>
<svg style="left:1008px;top:420.2px;" width="6.4" height="2.6" viewBox="0 0 6.4 2.6" preserveAspectRatio="none"><path d="M0 2.6 L3.2 0 L6.4 2.6 Z" fill="#fff"/></svg>
<svg style="left:1033.5px;top:416.2px;" width="18" height="10" viewBox="0 0 18 10" preserveAspectRatio="none"><path d="M0 7 C2 6 1.8 3.4 2.6 2 C3.6 0 8 0 9 2 C9.8 3.4 9.6 6 11.6 7 Z M4.4 7.6 H7.4 V8.6 H4.4 Z" fill="#c9aaa7"/><ellipse cx="12.8" cy="6.8" rx="5.4" ry="3.2" fill="#fff"/></svg>
<span class="t" style="left:1044px;top:419.75px;font-size:6.1px;line-height:6.1px;font-weight:700;color:#7a2f2b;transform:scaleX(1.3567);">2</span>
<div style="left:1074px;top:423.6px;width:1.2px;height:1px;background:#c78a86;"></div>
<div style="left:1076.4px;top:423.6px;width:1.2px;height:1px;background:#c78a86;"></div>
<div style="left:1078.8px;top:423.6px;width:1.2px;height:1px;background:#c78a86;"></div>
<div style="left:1078.8px;top:421.4px;width:1.2px;height:1px;background:#c78a86;"></div>
</div></body></html>
